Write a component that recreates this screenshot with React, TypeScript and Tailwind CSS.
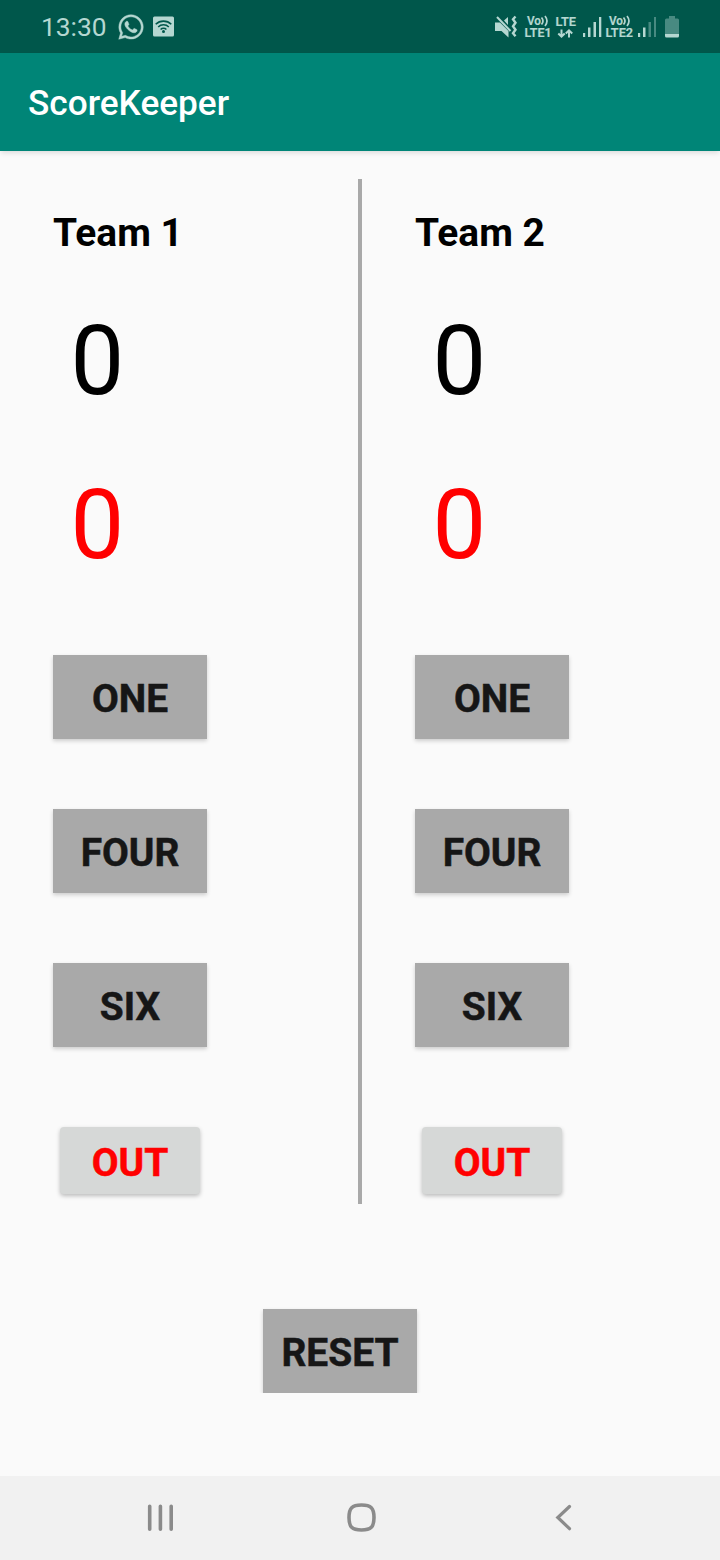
import { useState } from "react";
import { FaWhatsapp } from "react-icons/fa";

function StatusBar() {
  return (
    <header className="flex h-[53px] w-full bg-[#00574b] text-[#b5d7d1]">
      <div className="flex h-full items-center pl-[41px]">
        <span className="w-[75.500px] pt-px text-[26.300px] leading-[54px]">13:30</span>
        <FaWhatsapp size={28} stroke="currentColor" strokeWidth={8} />
        <svg className="ml-[7.500px]" width="23" height="22" viewBox="0 0 23 22">
          <rect x="1" y="0.5" width="21" height="20" rx="1.5" fill="currentColor" />
          <g fill="none" stroke="#00574b" strokeWidth="1.6">
            <path d="M3.700 8.300a11.200 11.200 0 0 1 15.600 0" />
            <path d="M6.200 11a7.500 7.500 0 0 1 10.600 0" />
            <path d="M8.600 13.500a4.100 4.100 0 0 1 5.800 0" />
          </g>
          <circle cx="11.500" cy="15.500" r="1.500" fill="#00574b" />
        </svg>
      </div>
      <svg className="ml-auto" width="240" height="53" viewBox="480 0 240 53" fill="currentColor">
        <path d="M495 22.500h5l8.500 8.500v6.500l-7-6.500h-6.500zM504 20.500l4-3.500v8z" />
        <path d="M497 17l13.500 14" stroke="currentColor" strokeWidth="2" fill="none" />
        <path d="M515.500 16.500l-2.500 2.800 2.500 3.500-2.500 3.500 2.500 3.500-2.500 3.500 2.500 3" stroke="currentColor" strokeWidth="2.400" fill="none" />
        <g fontSize="12.500" fontWeight="600" stroke="currentColor" strokeWidth="0.200">
          <text x="527" y="25" fontSize="12" textLength="14" lengthAdjust="spacingAndGlyphs">Vo</text>
          <text x="524.500" y="37" textLength="27" lengthAdjust="spacingAndGlyphs">LTE1</text>
          <text x="555.500" y="25.500" textLength="20.500" lengthAdjust="spacingAndGlyphs">LTE</text>
          <text x="609" y="25" fontSize="12" textLength="14" lengthAdjust="spacingAndGlyphs">Vo</text>
          <text x="605.500" y="37" textLength="27.500" lengthAdjust="spacingAndGlyphs">LTE2</text>
        </g>
        <g fill="none" stroke="currentColor" strokeWidth="1.700">
          <path d="M541.500 17.500q3 3.500 0 7M545 16q4 5 0 10" />
          <path d="M623.500 17.500q3 3.500 0 7M627 16q4 5 0 10" />
          <path d="M561.500 29.500v7M558.300 33.500l3.200 3.200 3.200-3.200M569 37.500v-7M565.800 33.500l3.200-3.200 3.200 3.200" strokeWidth="2" />
        </g>
        <path d="M583 33h2.200v4h-2.200zM588 27.500h2.500v9.500h-2.500zM593.500 22h2.500v15h-2.500zM599 17h2.300v20h-2.300z" />
        <path d="M638 33h2.200v4h-2.200zM643 27.500h2.500v9.500h-2.500z" />
        <path d="M648.500 22h2.500v15h-2.500zM654 17h2v20h-2z" opacity="0.400" />
        <path d="M665 20q0-1.500 1.500-1.500h2.500v-2.500h6v2.500h2.500q1.500 0 1.500 1.500v14h-14z" opacity="0.400" />
        <path d="M665 34h14v2q0 1.500-1.500 1.500h-11q-1.500 0-1.500-1.500z" />
      </svg>
    </header>
  );
}

const BUTTON =
  "h-[84px] w-[154px] bg-[#a9a9a9] pt-[2px] text-center text-[38.900px] font-bold leading-[84px] text-[#161616] [-webkit-text-stroke:0.5px_#161616] shadow-[0_2px_4px_rgba(0,0,0,0.18)]";

function Team({ name }: { name: string }) {
  const [score, setScore] = useState(0);
  const [outs, setOuts] = useState(0);
  return (
    <section className="flex flex-1 flex-col items-start pl-[53px] pt-[28px]">
      <h2 className="h-[52px] text-[38.900px] font-bold leading-[52px]">{name}</h2>
      <div className="mt-[46px] h-[112px] pl-[17.500px] text-[95.500px] leading-[112px]">{score}</div>
      <div className="mt-[52px] h-[112px] pl-[17.500px] text-[95.500px] leading-[112px] text-[#ff0000]">{outs}</div>
      <div className="mt-[74px] flex flex-col gap-[70px]">
        <button className={BUTTON} onClick={() => setScore(score + 1)}>ONE</button>
        <button className={BUTTON} onClick={() => setScore(score + 4)}>FOUR</button>
        <button className={BUTTON} onClick={() => setScore(score + 6)}>SIX</button>
      </div>
      <button
        className="ml-[7px] mt-[80px] h-[67px] w-[140px] rounded-[4px] bg-[#d6d8d7] pt-[2px] text-center text-[38.900px] font-bold leading-[67px] text-[#ff0000] [-webkit-text-stroke:0.5px_#ff0000] shadow-[0_2px_4px_rgba(0,0,0,0.25)]"
        onClick={() => setOuts(outs + 1)}
      >
        OUT
      </button>
    </section>
  );
}

export default function App() {
  const [game, setGame] = useState(0);
  return (
    <div className="flex h-[1560px] w-[720px] flex-col overflow-hidden bg-[#fafafa] font-[Roboto,sans-serif] text-black">
      <StatusBar />
      <div className="h-[98px] bg-[#008577] pl-[28px] pt-px text-[35.200px] font-medium leading-[98px] text-white shadow-[0_3px_5px_-1px_rgba(0,0,0,0.12)]">
        ScoreKeeper
      </div>
      <main className="flex h-[1325px] flex-col pt-[28px]">
        <div key={game} className="flex h-[1025px]">
          <Team name="Team 1" />
          <div className="w-[4px] bg-[#a9a9a9]" />
          <Team name="Team 2" />
        </div>
        <button
          className={BUTTON + " ml-[263px] mt-[105px] [clip-path:inset(-6px_-6px_0_-6px)]"}
          onClick={() => setGame(game + 1)}
        >
          RESET
        </button>
      </main>
      <nav className="flex h-[84px] items-center bg-[#f1f1f1]">
        <svg width="720" height="84" viewBox="0 0 720 84" fill="none" stroke="#8b8b8b" strokeWidth="3.600" strokeLinecap="round">
          <path d="M149.700 30.200v23M160.400 30.200v23M171.200 30.200v23" />
          <path d="M361.500 29c9.500 0 12.500 3 12.500 12.500s-3 12.500-12.500 12.500-12.500-3-12.500-12.500 3-12.500 12.500-12.500z" />
          <path d="M569.500 30.500l-11.700 11 11.700 11.200" strokeWidth="3.200" />
        </svg>
      </nav>
    </div>
  );
}
